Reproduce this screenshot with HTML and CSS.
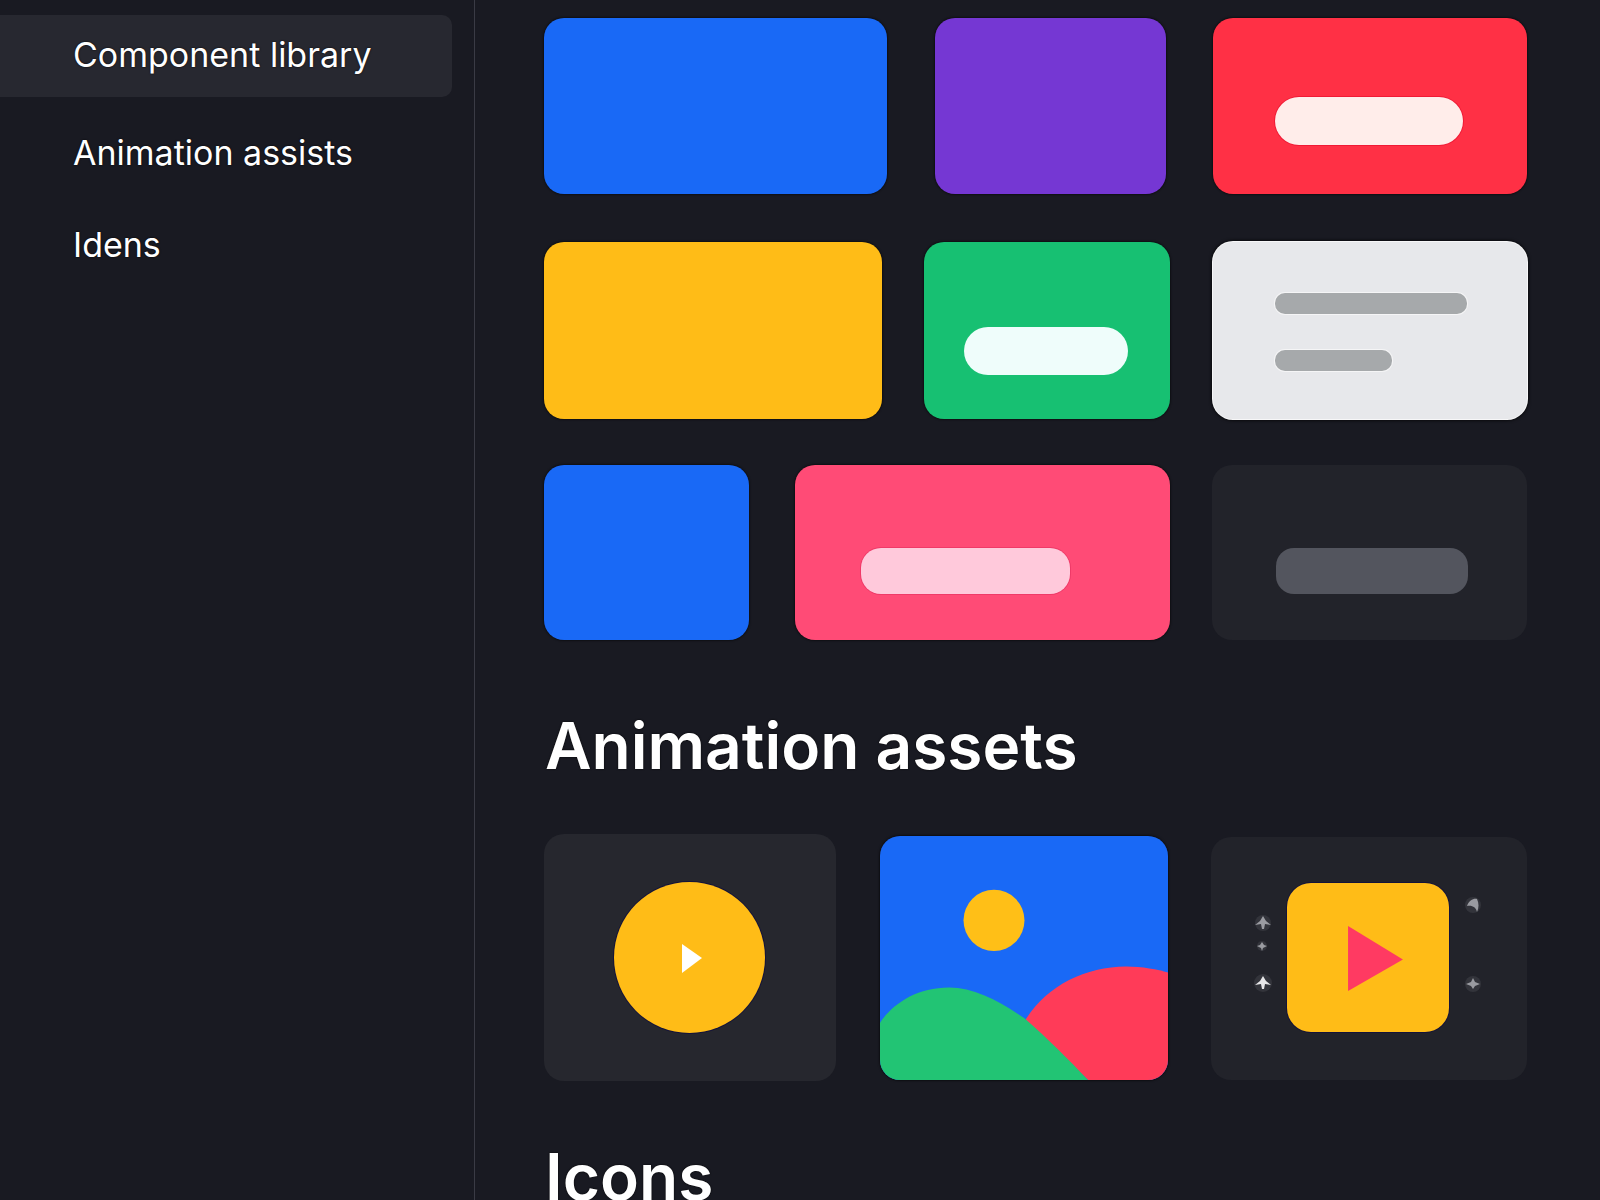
FILE: index.html
```html
<!DOCTYPE html>
<html lang="en">
<head>
<meta charset="utf-8">
<title>Component library</title>
<link rel="stylesheet" href="styles.css">
</head>
<body>
<div class="app">
  <aside class="sidebar">
    <nav class="nav">
      <a class="nav-item active">Component library</a>
      <a class="nav-item">Animation assists</a>
      <a class="nav-item">Idens</a>
    </nav>
  </aside>
  <main class="main">
    <div class="swatches">
      <div class="row row-a">
        <div class="tile blue w343"></div>
        <div class="tile purple w232"></div>
        <div class="tile red w314 center-pill pull-1"><span class="pill pill-red"></span></div>
      </div>
      <div class="row row-b">
        <div class="tile yellow w338"></div>
        <div class="tile green w246 center-pill"><span class="pill pill-green"></span></div>
        <div class="tile paper w314 push-1">
          <span class="bar bar-long"></span>
          <span class="bar bar-short"></span>
        </div>
      </div>
      <div class="row row-c">
        <div class="tile blue w205"></div>
        <div class="tile pink w375 center-pill"><span class="pill pill-pink"></span></div>
        <div class="tile dark w315 center-pill"><span class="pill pill-dark"></span></div>
      </div>
    </div>

    <h2 class="heading heading-anim">Animation assets</h2>

    <div class="row row-assets">
      <div class="asset dark-card w292">
        <div class="disc">
          <svg class="disc-play" viewBox="0 0 20 30"><path class="fill-white" d="M0 1 L20 15 L0 30 Z"/></svg>
        </div>
      </div>
      <div class="asset picture w288 push-1">
        <svg class="scene" viewBox="0 0 288 243" preserveAspectRatio="none">
          <rect class="fill-blue" width="288" height="243"/>
          <circle class="fill-yellow" cx="114" cy="84" r="30.5"/>
          <path class="fill-red" d="M145 184 C165 150 205 130 246 130 C262 130 278 133 288 136 V243 H208 Z"/>
          <path class="fill-green" d="M0 186 C12 168 36 151 69 151 C95 151 120 165 145 182 C168 202 188 222 208 243 H0 Z"/>
        </svg>
      </div>
      <div class="asset dark-card w316 player">
        <svg class="sparks" viewBox="0 0 22 148">
          <g class="spark dim"><circle class="halo" cx="11" cy="40" r="8"/><path class="star" d="M11 33 L14 38 L19 42 L13 41 L12 46 L10 46 L9 41 L3 42 L8 38 Z"/></g>
          <g class="spark dim"><circle class="halo" cx="10" cy="63" r="5"/><path class="star" d="M10 59 L12 62 L15 63 L11 65 L10 68 L9 65 L5 63 L8 62 Z"/></g>
          <g class="spark bright"><circle class="halo" cx="11" cy="100" r="9"/><path class="star" d="M11 93 L14 98 L19 102 L13 101 L12 106 L10 106 L9 101 L3 102 L8 98 Z"/></g>
        </svg>
        <div class="screen">
          <svg class="screen-play" viewBox="0 0 54 64"><path class="fill-rose" d="M0 0 L54 33 L0 64 Z"/></svg>
        </div>
        <svg class="sparks" viewBox="0 0 22 148">
          <g class="spark dim"><circle class="halo" cx="11" cy="22" r="8"/><path class="star" d="M5 23 C7 17 12 15 15 16 C17 20 17 25 15 29 C14 24 10 22 5 23 Z"/></g>
          <g class="spark dim"><circle class="halo" cx="11" cy="101" r="8"/><path class="star" d="M11 95 L13 99 L18 101 L13 103 L11 106 L9 103 L4 101 L9 99 Z"/></g>
        </svg>
      </div>
    </div>

    <h2 class="heading heading-icons">Icons</h2>
  </main>
</div>
</body>
</html>
```
FILE: styles.css
```css
* { box-sizing: border-box; }

html, body {
  margin: 0;
  height: 100%;
  overflow: hidden;
  background: #191a22;
}

body {
  font-family: "Inter", "Liberation Sans", sans-serif;
  color: #fff;
}

.app {
  display: flex;
  height: 1200px;
  overflow: hidden;
}

/* Sidebar */
.sidebar {
  flex: 0 0 475px;
  border-right: 1px solid #3a3b45;
  padding-top: 15px;
}

.nav {
  display: flex;
  flex-direction: column;
  width: 452px;
}

.nav-item {
  display: flex;
  align-items: center;
  height: 82px;
  padding-left: 73px;
  font-size: 34px;
  font-weight: 400;
  color: #fff;
  text-shadow: 0 0 2px #000;
  border-radius: 0 10px 10px 0;
}

.nav-item.active {
  background: #272830;
  padding-bottom: 4px;
}

.nav-item:nth-child(2) { margin-top: 14px; }
.nav-item:nth-child(3) { margin-top: 10px; }

/* Main column */
.main {
  flex: 1;
  min-width: 0;
  padding: 18px 73px 0 69px;
}

.swatches {
  display: flex;
  flex-direction: column;
}

.row { display: flex; }

.row-a { gap: 48px; }
.row-b { gap: 42px; margin-top: 48px; }
.row-c { gap: 46px; margin-top: 46px; }
.row-c .dark { margin-left: -4px; }

.row-a .tile { height: 176px; }
.row-b .tile { height: 177px; }
.row-c .tile { height: 175px; }

.w343 { width: 343px; }
.w232 { width: 232px; }
.w314 { width: 314px; }
.w338 { width: 338px; }
.w246 { width: 246px; }
.w205 { width: 205px; }
.w375 { width: 375px; }
.w315 { width: 315px; }
.w292 { width: 292px; }
.w288 { width: 288px; }
.w316 { width: 316px; }

.pull-1 { margin-left: -1px; }
.push-1 { margin-left: 1px; }

.tile {
  border-radius: 20px;
  box-shadow: 0 0 2px 1px rgba(0, 0, 0, .45);
}

.blue { background: #1969f6; }
.purple { background: #7537d3; }
.red { background: #ff3045; }
.yellow { background: #ffbc17; }
.green { background: #17c072; }
.paper { background: #e7e8eb; box-shadow: 0 0 0 1px #f7f7f8, 0 0 3px 2px rgba(0, 0, 0, .6); }
.pink { background: #ff4b76; }
.dark { background: #22232a; box-shadow: none; }

.center-pill {
  display: flex;
  align-items: flex-end;
  justify-content: center;
}

.pill {
  display: block;
  height: 48px;
  border-radius: 24px;
}

.pill-red { width: 188px; background: #ffedea; margin-bottom: 49px; margin-right: 3px; box-shadow: 0 0 0 1px #f01a35; }
.pill-green { width: 164px; background: #effdfb; margin-bottom: 44px; margin-left: -3px; }
.pill-pink { width: 209px; height: 46px; background: #ffc9db; margin-bottom: 46px; margin-right: 34px; box-shadow: 0 0 0 1px #ef3a68; border-radius: 20px; }
.pill-dark { width: 192px; height: 46px; background: #53555e; margin-bottom: 46px; margin-left: 5px; border-radius: 18px; }

.bar {
  display: block;
  height: 21px;
  border-radius: 10px;
  background: #a6a9ab;
  box-shadow: 0 0 0 1px #f5f5f6;
  margin-left: 62px;
}

.bar-long { width: 192px; margin-top: 51px; }
.bar-short { width: 117px; margin-top: 36px; }

/* Headings */
.heading {
  margin: 0;
  font-size: 64px;
  font-weight: 600;
  line-height: 80px;
  color: #fff;
  text-shadow: 0 0 2px #000;
  padding-left: 1px;
}

.heading-anim { margin-top: 66px; }
.heading-icons { margin-top: 56px; }

/* Asset cards */
.row-assets {
  gap: 43px;
  margin-top: 48px;
  height: 247px;
}

.asset {
  height: 247px;
  border-radius: 20px;
  overflow: hidden;
}

.dark-card {
  background: #26272e;
  display: flex;
  align-items: center;
  justify-content: center;
}

.disc {
  display: flex;
  align-items: center;
  justify-content: center;
  width: 151px;
  height: 151px;
  margin-right: 1px;
  border-radius: 50%;
  background: #ffbc17;
  box-shadow: 0 0 0 1px #14133a;
}

.disc-play { width: 20px; height: 30px; margin-left: 4px; }

.picture {
  box-shadow: 0 0 2px 1px rgba(0, 0, 0, .5);
  margin-top: 2px;
  height: 244px;
}

.scene { display: block; width: 100%; height: 100%; }

.fill-white { fill: #fff; }
.fill-blue { fill: #1969f6; }
.fill-yellow { fill: #ffbf17; }
.fill-red { fill: #ff3b58; }
.fill-green { fill: #22c474; }
.fill-rose { fill: #ff3a62; }

.player {
  background: #22232a;
  gap: 13px;
  margin-top: 3px;
  height: 243px;
  padding-right: 2px;
}

.screen {
  display: flex;
  align-items: center;
  justify-content: center;
  width: 162px;
  height: 149px;
  margin-bottom: 3px;
  border-radius: 24px;
  background: #ffbc17;
  box-shadow: 0 0 0 1px #14133a;
}

.screen-play { width: 55px; height: 65px; margin-left: 14px; margin-top: 3px; }

.sparks { width: 22px; height: 148px; flex: none; margin-bottom: 3px; }

.spark { filter: blur(.7px); }
.halo { fill: #33343b; }
.dim .star { fill: #9a9ba1; }
.bright .star { fill: #e6e6e8; }
```
